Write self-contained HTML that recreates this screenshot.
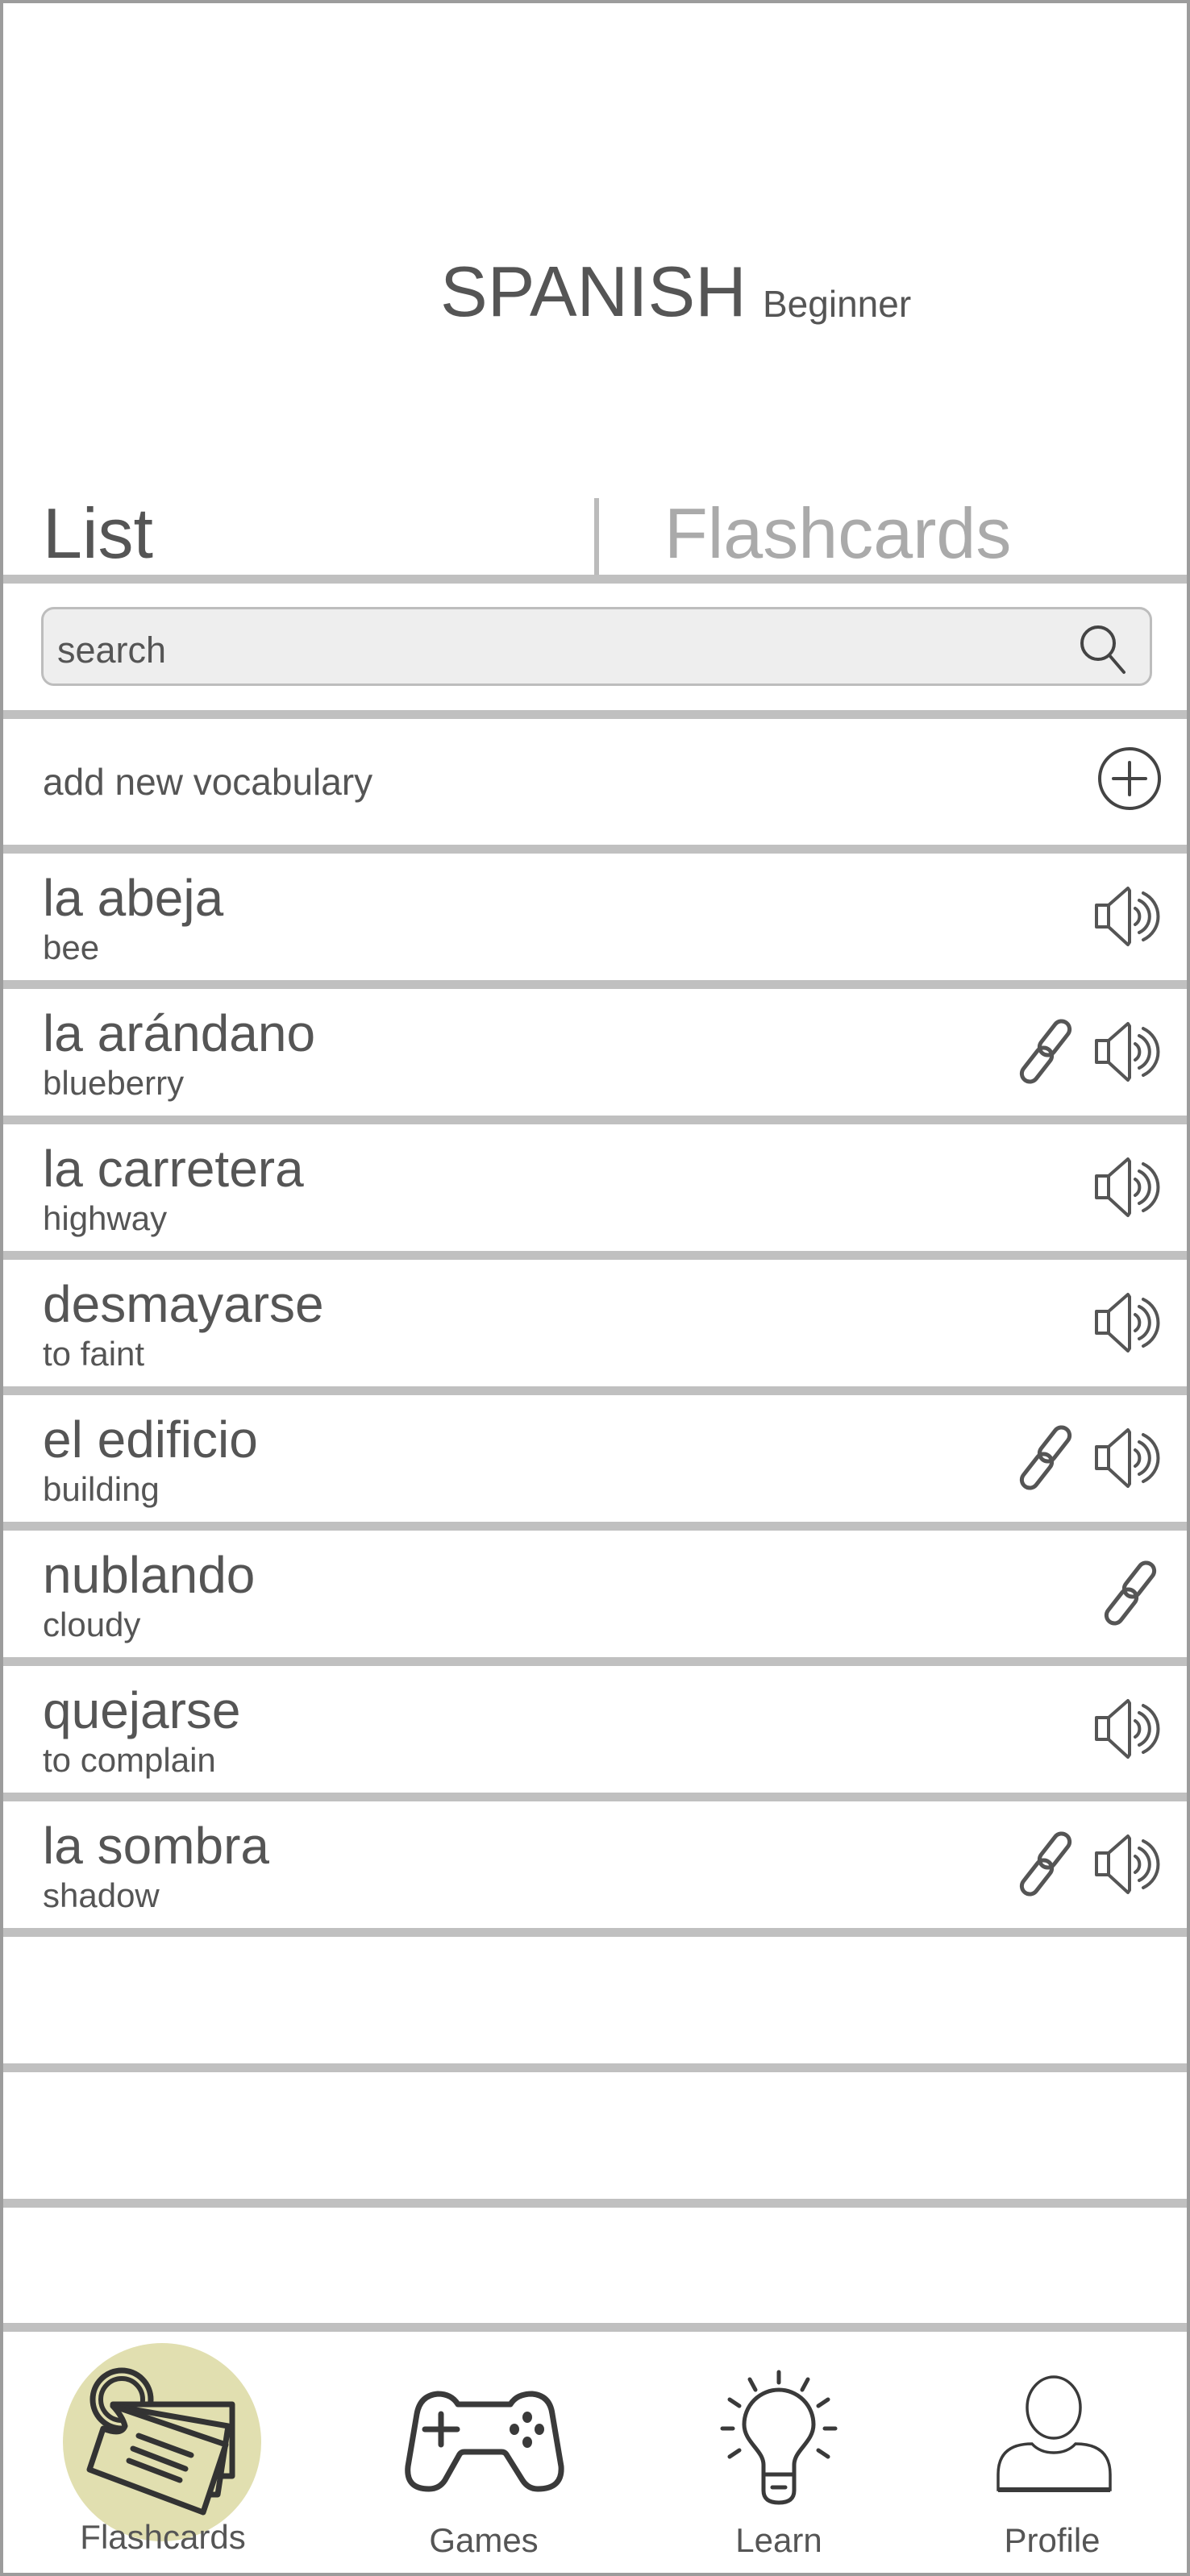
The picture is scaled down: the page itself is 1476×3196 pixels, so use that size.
<!DOCTYPE html>
<html><head><meta charset="utf-8"><style>
html,body{margin:0;padding:0}
body{width:1476px;height:3196px;position:relative;overflow:hidden;background:#fff;font-family:"Liberation Sans",Arial,sans-serif;color:#555}
.frame{position:absolute;left:0;top:0;width:1476px;height:3196px;box-sizing:border-box;border:4px solid #9c9c9c;pointer-events:none;z-index:5}
.t{position:absolute;line-height:1;white-space:nowrap}
.sep{position:absolute;left:0;width:1476px;height:11px;background:#c0c0c0}
.w{font-size:64px;left:53px}
.tr{font-size:42px;left:53px}
svg{position:absolute;overflow:visible}
</style></head><body>
<div class="t" style="left:546px;top:318px;font-size:88px">SPANISH</div>
<div class="t" style="left:946px;top:354px;font-size:46px">Beginner</div>
<div class="t" style="left:53px;top:618px;font-size:88px">List</div>
<div class="t" style="left:824px;top:618px;font-size:88px;color:#aaa">Flashcards</div>
<div style="position:absolute;left:737px;top:618px;width:6px;height:100px;background:#bbb"></div>
<div class="sep" style="top:713px"></div>
<div style="position:absolute;left:51px;top:753px;width:1378px;height:98px;box-sizing:border-box;border:3px solid #bdbdbd;border-radius:16px;background:#eee"></div>
<div class="t" style="left:71px;top:784px;font-size:45px">search</div>
<svg style="left:0;top:0" width="1476" height="3196" viewBox="0 0 1476 3196">
<g fill="none" stroke="#444" stroke-width="4" stroke-linecap="round">
<circle cx="1362" cy="798" r="20"/><line x1="1376" y1="813" x2="1394" y2="834"/>
<circle cx="1401" cy="966" r="37"/><line x1="1401" y1="946" x2="1401" y2="986"/><line x1="1381" y1="966" x2="1421" y2="966"/>
</g></svg>
<div class="sep" style="top:881px"></div>
<div class="t" style="left:53px;top:947px;font-size:46px">add new vocabulary</div>

<div class="sep" style="top:1048px"></div>
<div class="t w" style="top:1082px">la abeja</div><div class="t tr" style="top:1155px">bee</div>
<div class="sep" style="top:1216px"></div>
<div class="t w" style="top:1250px">la arándano</div><div class="t tr" style="top:1323px">blueberry</div>
<div class="sep" style="top:1384px"></div>
<div class="t w" style="top:1418px">la carretera</div><div class="t tr" style="top:1491px">highway</div>
<div class="sep" style="top:1552px"></div>
<div class="t w" style="top:1586px">desmayarse</div><div class="t tr" style="top:1659px">to faint</div>
<div class="sep" style="top:1720px"></div>
<div class="t w" style="top:1754px">el edificio</div><div class="t tr" style="top:1827px">building</div>
<div class="sep" style="top:1888px"></div>
<div class="t w" style="top:1922px">nublando</div><div class="t tr" style="top:1995px">cloudy</div>
<div class="sep" style="top:2056px"></div>
<div class="t w" style="top:2090px">quejarse</div><div class="t tr" style="top:2163px">to complain</div>
<div class="sep" style="top:2224px"></div>
<div class="t w" style="top:2258px">la sombra</div><div class="t tr" style="top:2331px">shadow</div>
<div class="sep" style="top:2392px"></div>
<div class="sep" style="top:2560px"></div>
<div class="sep" style="top:2728px"></div>
<div class="sep" style="top:2882px"></div>

<svg width="0" height="0" style="position:absolute">
<defs>
<g id="spk" fill="none" stroke="#555" stroke-width="4" stroke-linejoin="round" stroke-linecap="round">
<rect x="5" y="26" width="15" height="27"/>
<path d="M20 26 L44 5 L46 8 L46 72 L44 75 L20 53"/>
<path d="M53 30 A12 12 0 0 1 53 50"/>
<path d="M58 20 A22 22 0 0 1 58 60"/>
<path d="M63 11 A32 32 0 0 1 63 69"/>
</g>
<g id="lnk" fill="none" stroke="#555" stroke-width="5">
<rect x="-10" y="-24" width="20" height="48" rx="10" transform="translate(43 23) rotate(38)"/>
<rect x="-10" y="-24" width="20" height="48" rx="10" transform="translate(21 56) rotate(38)"/>
</g>
</defs></svg>
<svg style="left:1355px;top:1097px" width="90" height="80"><use href="#spk"/></svg>
<svg style="left:1355px;top:1265px" width="90" height="80"><use href="#spk"/></svg>
<svg style="left:1265px;top:1265px" width="64" height="80"><use href="#lnk"/></svg>
<svg style="left:1355px;top:1433px" width="90" height="80"><use href="#spk"/></svg>
<svg style="left:1355px;top:1601px" width="90" height="80"><use href="#spk"/></svg>
<svg style="left:1355px;top:1769px" width="90" height="80"><use href="#spk"/></svg>
<svg style="left:1265px;top:1769px" width="64" height="80"><use href="#lnk"/></svg>
<svg style="left:1370px;top:1937px" width="64" height="80"><use href="#lnk"/></svg>
<svg style="left:1355px;top:2105px" width="90" height="80"><use href="#spk"/></svg>
<svg style="left:1355px;top:2273px" width="90" height="80"><use href="#spk"/></svg>
<svg style="left:1265px;top:2273px" width="64" height="80"><use href="#lnk"/></svg>

<svg style="left:0;top:0" width="1476" height="3196" viewBox="0 0 1476 3196">
<circle cx="201" cy="3030" r="123" fill="#e1dfb0"/>
<g stroke="#333" stroke-width="7" stroke-linejoin="round" stroke-linecap="round">
<circle cx="151" cy="2977" r="36" fill="none" stroke-width="7"/>
<circle cx="151" cy="2977" r="26" fill="none" stroke-width="6"/>
<path d="M140 2983 L288 2983 L288 3072 L276 3072" fill="#e1dfb0"/>
<path d="M140 2985 L283 3010 L270 3095 L262 3095" fill="#e1dfb0"/>
<path d="M140 2985 L280 3033 L252 3117 L111 3064 L128 3013 Q150 3022 155 3010 Q152 2998 140 2985 Z" fill="#e1dfb0"/>
<line x1="172" y1="3022" x2="237" y2="3046"/>
<line x1="165" y1="3038" x2="230" y2="3063"/>
<line x1="160" y1="3053" x2="223" y2="3077"/>
</g>
<g fill="none" stroke="#3a3a3a" stroke-width="7" stroke-linejoin="round" stroke-linecap="round">
<path d="M543 2970 Q560 2970 568 2983 L633 2983 Q641 2970 660 2970 Q682 2972 685 2995 L696 3060 Q698 3088 667 3088 Q655 3088 648 3077 L628 3045 Q626 3042 622 3042 L576 3042 Q572 3042 570 3045 L552 3077 Q545 3088 532 3088 Q503 3088 506 3060 L517 2995 Q521 2972 543 2970 Z"/>
<line x1="527" y1="3014" x2="567" y2="3014"/><line x1="547" y1="2995" x2="547" y2="3033"/>
</g>
<g fill="#3a3a3a"><ellipse cx="654" cy="2999" rx="6" ry="7"/><ellipse cx="654" cy="3030" rx="6" ry="7"/><ellipse cx="638" cy="3014" rx="6" ry="7"/><ellipse cx="669" cy="3014" rx="6" ry="7"/></g>
<g fill="none" stroke="#3a3a3a" stroke-width="5" stroke-linecap="round" stroke-linejoin="round">
<path d="M947 3070 L947 3058 C947 3040 923 3030 923 3008 A43 43 0 0 1 1009 3008 C1009 3030 985 3040 985 3058 L985 3070 Z"/>
<path d="M947 3070 L947 3090 Q947 3105 966 3105 Q985 3105 985 3090 L985 3070"/>
<line x1="958" y1="3086" x2="974" y2="3086"/>
<line x1="966" y1="2943" x2="966" y2="2956"/>
<line x1="930" y1="2952" x2="937" y2="2965"/><line x1="1002" y1="2952" x2="995" y2="2965"/>
<line x1="905" y1="2977" x2="917" y2="2985"/><line x1="1027" y1="2977" x2="1015" y2="2985"/>
<line x1="896" y1="3013" x2="909" y2="3013"/><line x1="1023" y1="3013" x2="1036" y2="3013"/>
<line x1="905" y1="3048" x2="917" y2="3040"/><line x1="1027" y1="3048" x2="1015" y2="3040"/>
</g>
<g fill="none" stroke="#3a3a3a" stroke-width="3.5">
<ellipse cx="1307" cy="2987" rx="33" ry="38"/>
<path d="M1238 3089 L1238 3070 Q1238 3032 1280 3032 Q1290 3043 1307 3043 Q1324 3043 1334 3032 Q1377 3032 1377 3070 L1377 3089 Z"/>
<line x1="1238" y1="3089" x2="1377" y2="3089" stroke-width="6"/>
</g>
</svg>
<div class="t" style="left:96px;top:3127px;font-size:42px;width:212px;text-align:center">Flashcards</div>
<div class="t" style="left:500px;top:3131px;font-size:42px;width:200px;text-align:center">Games</div>
<div class="t" style="left:866px;top:3131px;font-size:42px;width:200px;text-align:center">Learn</div>
<div class="t" style="left:1205px;top:3131px;font-size:42px;width:200px;text-align:center">Profile</div>
<div class="frame"></div>
</body></html>
